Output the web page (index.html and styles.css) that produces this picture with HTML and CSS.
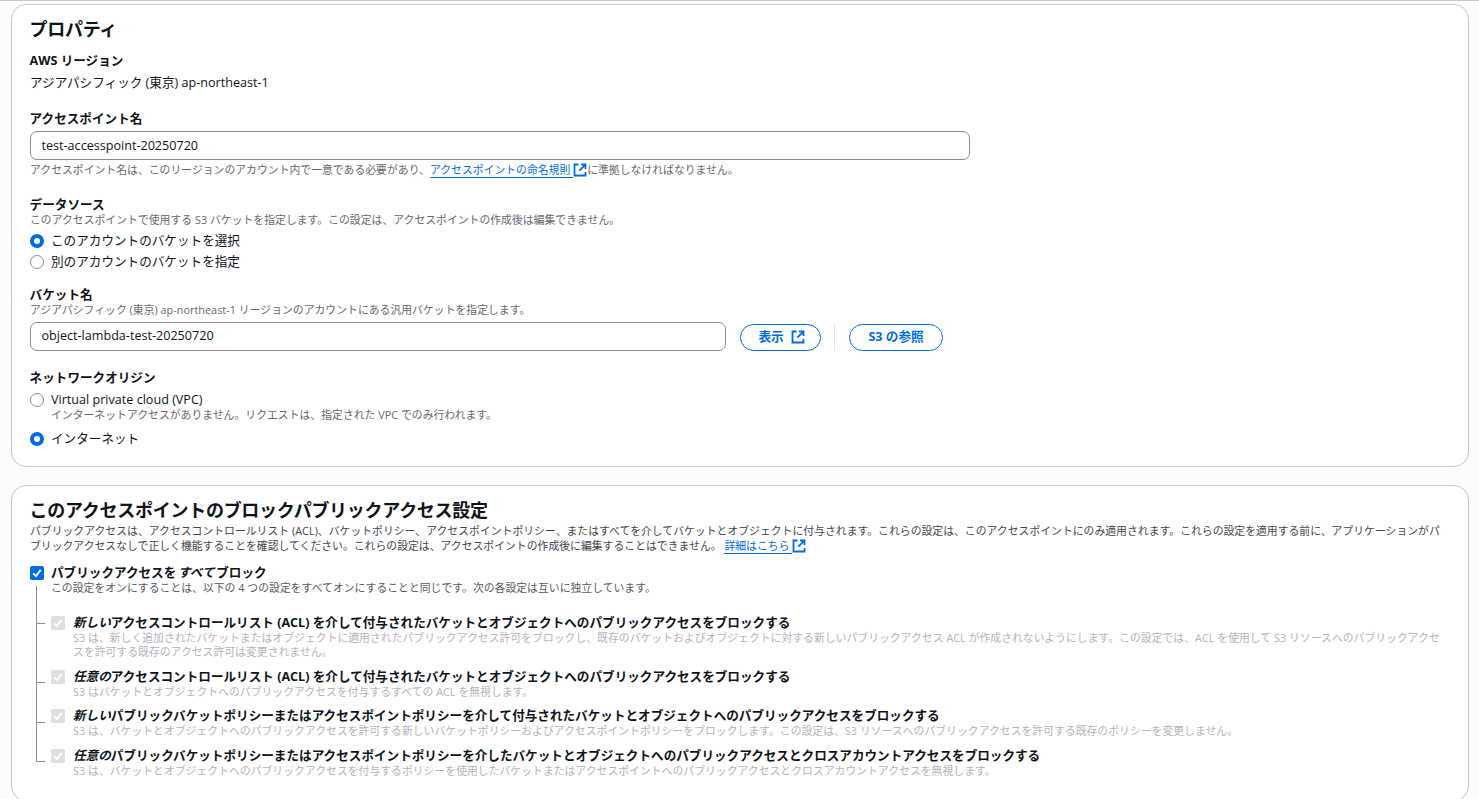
FILE: index.html
```html
<!DOCTYPE html>
<html lang="ja">
<head>
<meta charset="utf-8">
<title>アクセスポイントの作成</title>
<link rel="stylesheet" href="styles.css">
</head>
<body>
<svg class="defs" width="0" height="0">
  <symbol id="external" viewBox="0 0 14 14"><path d="M5.5 1.5H1.5V12.5H12.5V9M8 1.5H12.5V6M12.2 1.8L6.3 7.7" fill="none" stroke="currentColor" stroke-width="1.8"/></symbol>
  <symbol id="check" viewBox="0 0 14 14"><path d="M3.2 7.4L5.9 10.1L10.7 3.9" fill="none" stroke="#fff" stroke-width="1.9"/></symbol>
</svg>
<main class="page">
  <section class="card properties">
    <h2 class="title">プロパティ</h2>
    <div class="label region-label">AWS リージョン</div>
    <div class="value">アジアパシフィック (東京) ap-northeast-1</div>
    <div class="label name-label">アクセスポイント名</div>
    <div class="input name-input">test-accesspoint-20250720</div>
    <div class="hint constraint">アクセスポイント名は、このリージョンのアカウント内で一意である必要があり、<a class="link">アクセスポイントの命名規則 </a><svg class="ext"><use href="#external"/></svg>に準拠しなければなりません。</div>

    <div class="label source-label">データソース</div>
    <div class="hint">このアクセスポイントで使用する S3 バケットを指定します。この設定は、アクセスポイントの作成後は編集できません。</div>
    <div class="option first-option"><span class="radio on"></span><span>このアカウントのバケットを選択</span></div>
    <div class="option second-option"><span class="radio"></span><span>別のアカウントのバケットを指定</span></div>

    <div class="label bucket-label">バケット名</div>
    <div class="hint">アジアパシフィック (東京) ap-northeast-1 リージョンのアカウントにある汎用バケットを指定します。</div>
    <div class="bucket-row">
      <div class="input bucket-input">object-lambda-test-20250720</div>
      <div class="button view"><span>表示</span><svg class="ext"><use href="#external"/></svg></div>
      <div class="divider"></div>
      <div class="button browse">S3 の参照</div>
    </div>

    <div class="label network-label">ネットワークオリジン</div>
    <div class="option lowered vpc"><span class="radio"></span><span>Virtual private cloud (VPC)</span></div>
    <div class="hint indented">インターネットアクセスがありません。リクエストは、指定された VPC でのみ行われます。</div>
    <div class="option lowered internet"><span class="radio on"></span><span>インターネット</span></div>
  </section>

  <section class="card block-access">
    <h2 class="title">このアクセスポイントのブロックパブリックアクセス設定</h2>
    <div class="description">パブリックアクセスは、アクセスコントロールリスト (ACL)、バケットポリシー、アクセスポイントポリシー、またはすべてを介してバケットとオブジェクトに付与されます。これらの設定は、このアクセスポイントにのみ適用されます。これらの設定を適用する前に、アプリケーションがパ<br>ブリックアクセスなしで正しく機能することを確認してください。これらの設定は、アクセスポイントの作成後に編集することはできません。 <a class="link">詳細はこちら </a><svg class="ext"><use href="#external"/></svg></div>
    <div class="option lowered block-all"><svg class="box on"><use href="#check"/></svg><span class="strong">パブリックアクセスを<em> すべて </em>ブロック</span></div>
    <div class="hint indented dark">この設定をオンにすることは、以下の 4 つの設定をすべてオンにすることと同じです。次の各設定は互いに独立しています。</div>
    <div class="tree">
      <svg class="branches" viewBox="0 0 10 176"><path d="M.5 0V175.500H9M.5 37.500H9M.5 96.500H9M.5 136.500H9" fill="none" stroke="#8c8c94"/></svg>
      <div class="setting">
        <div class="option lowered"><svg class="box"><use href="#check"/></svg><span class="strong"><em>新しい</em>アクセスコントロールリスト (ACL) を介して付与されたバケットとオブジェクトへのパブリックアクセスをブロックする</span></div>
        <div class="hint muted">S3 は、新しく追加されたバケットまたはオブジェクトに適用されたパブリックアクセス許可をブロックし、既存のバケットおよびオブジェクトに対する新しいパブリックアクセス ACL が作成されないようにします。この設定では、ACL を使用して S3 リソースへのパブリックアクセ<br>スを許可する既存のアクセス許可は変更されません。</div>
      </div>
      <div class="setting">
        <div class="option lowered"><svg class="box"><use href="#check"/></svg><span class="strong"><em>任意の</em>アクセスコントロールリスト (ACL) を介して付与されたバケットとオブジェクトへのパブリックアクセスをブロックする</span></div>
        <div class="hint muted">S3 はバケットとオブジェクトへのパブリックアクセスを付与するすべての ACL を無視します。</div>
      </div>
      <div class="setting tight">
        <div class="option lowered"><svg class="box"><use href="#check"/></svg><span class="strong"><em>新しい</em>パブリックバケットポリシーまたはアクセスポイントポリシーを介して付与されたバケットとオブジェクトへのパブリックアクセスをブロックする</span></div>
        <div class="hint muted">S3 は、バケットとオブジェクトへのパブリックアクセスを許可する新しいバケットポリシーおよびアクセスポイントポリシーをブロックします。この設定は、S3 リソースへのパブリックアクセスを許可する既存のポリシーを変更しません。</div>
      </div>
      <div class="setting">
        <div class="option lowered"><svg class="box"><use href="#check"/></svg><span class="strong"><em>任意の</em>パブリックバケットポリシーまたはアクセスポイントポリシーを介したバケットとオブジェクトへのパブリックアクセスとクロスアカウントアクセスをブロックする</span></div>
        <div class="hint muted">S3 は、バケットとオブジェクトへのパブリックアクセスを付与するポリシーを使用したバケットまたはアクセスポイントへのパブリックアクセスとクロスアカウントアクセスを無視します。</div>
      </div>
    </div>
  </section>
</main>
</body>
</html>
```
FILE: styles.css
```css
* { box-sizing: border-box; }
html { height: 100%; overflow: hidden; }
body {
  height: 100%;
  margin: 0;
  overflow: hidden;
  background: #fcfcfd;
  color: #0f141a;
  font: 12.6px/18px "Open Sans", "Noto Sans CJK JP", sans-serif;
  white-space: nowrap;
}
.defs { position: absolute; }
.page {
  display: flex;
  flex-direction: column;
  gap: 18px;
  padding: 3px 10px 0 11px;
  border-top: 1px solid #c6c6cd;
}
.card {
  padding: 13px 18px 0;
  border: 1px solid #c6c6cd;
  border-radius: 15px;
  background: #fff;
}
.properties { height: 463px; }
.block-access { height: 316px; }
.title {
  margin: 0 0 0 -0.5px;
  font-size: 18px;
  line-height: 22px;
  font-weight: 700;
  letter-spacing: -0.27px;
}
.label, .strong { font-weight: 700; }
.label, .value { height: 18px; padding-top: 1px; }
.label { margin-left: -0.4px; }
.region-label { margin-top: 11px; }
.value { margin-top: 4px; }
.name-label { margin-top: 18px; }
.input {
  height: 29px;
  padding: 0 10.5px;
  border: 1px solid #8c8c94;
  border-radius: 7px;
  line-height: 27px;
}
.name-input { width: 940px; margin-top: 4px; }
.hint {
  color: #656871;
  font-size: 10.8px;
  line-height: 14px;
  letter-spacing: 0.046px;
}
.constraint { height: 14px; margin-top: 3px; }
.link {
  color: #006ce0;
  white-space: pre;
  border-bottom: 1px solid #006ce0;
}
.ext {
  width: 14px;
  height: 14px;
  color: #006ce0;
  vertical-align: -3px;
}
.source-label { margin-top: 18px; }
.option { display: flex; align-items: flex-start; gap: 7px; height: 18px; }
.lowered { padding-top: 1px; }
.radio {
  width: 14px;
  height: 14px;
  margin-top: 2px;
  border: 1px solid #8c8c94;
  border-radius: 50%;
  background: #fff;
}
.radio.on { border: 4.5px solid #006ce0; }
.first-option { margin-top: 5px; }
.second-option { margin-top: 3px; }
.bucket-label { margin-top: 14px; }
.bucket-row { display: flex; align-items: flex-end; margin-top: 5px; }
.bucket-input { width: 696px; line-height: 26px; }
.button {
  display: flex;
  align-items: center;
  justify-content: center;
  height: 27px;
  padding-bottom: 2px;
  border: 1px solid #006ce0;
  border-radius: 14px;
  color: #006ce0;
  font-weight: 700;
}
.button .ext { margin-top: 1px; }
.view { width: 81px; margin-left: 14px; padding-left: 2px; gap: 7px; }
.divider { width: 1px; height: 27px; margin: 0 14px 0 13px; background: #e4e4e8; }
.browse { width: 94px; }
.network-label { margin-top: 17px; }
.vpc { margin-top: 4px; }
.indented { padding-left: 21px; }
.internet { margin-top: 7px; }
.description {
  height: 30px;
  margin-top: 2px;
  color: #424650;
  font-size: 10.8px;
  line-height: 15px;
  letter-spacing: 0.046px;
}
.block-all { margin-top: 10px; }
.box {
  flex: none;
  width: 14px;
  height: 14px;
  margin-top: 2px;
  border-radius: 2px;
  background: #dedee3;
}
.box.on { background: #006ce0; }
.strong { white-space: pre; }
.block-all .strong { word-spacing: -1.5px; }
.dark { color: #565963; }
.muted { padding-left: 22px; color: #b4b4bb; }
.tree {
  position: relative;
  display: flex;
  flex-direction: column;
  gap: 8px;
  margin-top: 18px;
  padding-left: 21px;
}
.tree .option { gap: 8px; }
.branches { position: absolute; left: 6px; top: -27px; width: 10px; height: 176px; }
.tight { margin-top: -1px; }
```
